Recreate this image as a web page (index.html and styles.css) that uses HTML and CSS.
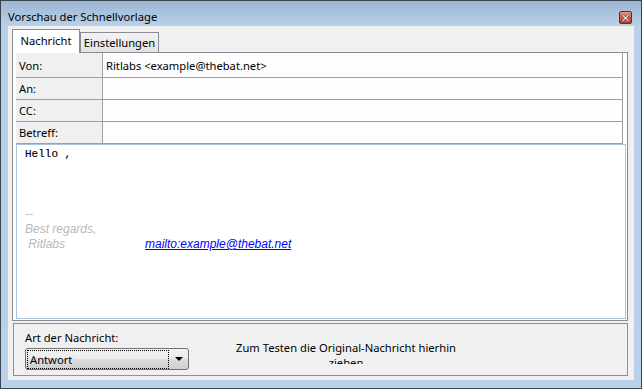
FILE: index.html
```html
<!DOCTYPE html>
<html lang="de">
<head>
  <meta charset="UTF-8">
  <meta name="viewport" content="width=device-width, initial-scale=1.0">
  <title>Vorschau der Schnellvorlage</title>
  <link rel="stylesheet" href="styles.css">
</head>
<body>

<div class="window">
  <!-- Title bar -->
  <div class="titlebar">
    <span class="title">Vorschau der Schnellvorlage</span>
    <button class="close-btn" title="Schließen">
      <svg width="13" height="13" viewBox="0 0 13 13">
        <path d="M4 3.5 L6.5 6 L9 3.5 L10 4.5 L7.5 7 L10 9.5 L9 10.5 L6.5 8 L4 10.5 L3 9.5 L5.5 7 L3 4.5 Z" fill="#fff" stroke="#5a2a22" stroke-width="0.6"/>
      </svg>
    </button>
  </div>

  <div class="client">
    <!-- Tabs -->
    <div class="tabs">
      <div class="tab active">Nachricht</div>
      <div class="tab">Einstellungen</div>
    </div>

    <div class="panel">
      <!-- Header fields -->
      <div class="fields">
        <div class="field first">
          <div class="label">Von:</div>
          <div class="value">Ritlabs &lt;example@thebat.net&gt;</div>
        </div>
        <div class="field">
          <div class="label">An:</div>
          <div class="value"></div>
        </div>
        <div class="field">
          <div class="label">CC:</div>
          <div class="value"></div>
        </div>
        <div class="field">
          <div class="label">Betreff:</div>
          <div class="value"></div>
        </div>
      </div>

      <!-- Message body -->
      <div class="message">
        <div class="mono">Hello ,</div>
        <div class="blank"></div>
        <div class="blank"></div>
        <div class="blank"></div>
        <div class="sig">--</div>
        <div class="sig">Best regards,</div>
        <div class="sig"><span class="sig-name">&nbsp;Ritlabs</span><a class="mailto" href="#">mailto:example@thebat.net</a></div>
      </div>
    </div>

    <!-- Bottom options -->
    <div class="group">
      <div class="type-box">
        <div class="type-label">Art der Nachricht:</div>
        <div class="combo">
          <span class="combo-text">Antwort</span>
          <span class="combo-arrow"></span>
        </div>
      </div>
      <div class="drop-hint">Zum Testen die Original-Nachricht hierhin ziehen</div>
    </div>
  </div>
</div>

</body>
</html>
```

FILE: styles.css
```css
/* General */
body {
  margin: 0;
  font-family: "Noto Sans", "Open Sans", sans-serif;
  font-size: 11.2px;
  color: #000;
}

.window {
  width: 642px;
  height: 389px;
  box-sizing: border-box;
  border: 1px solid #3a4450;
  background: linear-gradient(#9db6d3 0, #b9d0e9 25px, #b9d1ea 100%);
  padding: 0 7px 8px 7px;
  display: flex;
  flex-direction: column;
}

/* Title bar */
.titlebar {
  height: 25px;
  box-sizing: border-box;
  padding: 7px 2px 0 0;
  display: flex;
  align-items: center;
  justify-content: space-between;
}

.title {
  line-height: 18px;
}

.close-btn {
  width: 13px;
  height: 13px;
  padding: 0;
  border: 1px solid #5c2b22;
  border-radius: 2px;
  background: linear-gradient(#e49a89, #c85a43 50%, #b8452e);
  display: flex;
  align-items: center;
  justify-content: center;
  box-sizing: border-box;
}

.close-btn svg {
  display: block;
  margin: -1px;
}

/* Client area */
.client {
  flex: 1;
  background: #f0f0f0;
  padding: 0 6px 0 4px;
  display: flex;
  flex-direction: column;
}

/* Tabs */
.tabs {
  height: 26px;
  display: flex;
  align-items: flex-end;
}

.tab {
  height: 20px;
  box-sizing: border-box;
  border: 1px solid #898c95;
  border-bottom: none;
  background: linear-gradient(#f3f3f3, #e3e3e3);
  line-height: 19px;
  width: 79px;
  text-align: center;
}

.tab.active {
  width: 68px;
  height: 24px;
  margin-bottom: -1px;
  background: #fff;
  line-height: 22px;
  position: relative;
  z-index: 1;
}

/* Tab panel */
.panel {
  height: 269px;
  box-sizing: border-box;
  border: 1px solid #898c95;
  background: #fff;
  padding: 0 1px 1px 3px;
  display: flex;
  flex-direction: column;
}

.fields {
  margin-right: 3px;
  border-right: 1px solid #a0a0a0;
}

.field {
  display: flex;
  height: 22px;
  box-sizing: border-box;
  border-bottom: 1px solid #a0a0a0;
}

.field.first {
  height: 25px;
}

.label {
  width: 87px;
  background: #f0f0f0;
  border-right: 1px solid #a0a0a0;
  padding-left: 3px;
  box-sizing: border-box;
  display: flex;
  align-items: center;
}

.value {
  flex: 1;
  background: #fdfdfd;
  padding-left: 3px;
  display: flex;
  align-items: center;
}

/* Message body */
.message {
  flex: 1;
  border: 1px solid #abc3dd;
  padding: 2px 8px;
  line-height: 15px;
}

.mono {
  font-family: "Liberation Mono", monospace;
  font-size: 11px;
  height: 15px;
  -webkit-text-stroke: 0.15px #000;
}

.blank {
  height: 15px;
}

.sig {
  font-family: "Liberation Sans", Arial, sans-serif;
  font-size: 12px;
  font-style: italic;
  color: #b8b8b8;
  height: 15px;
}

.sig-name {
  display: inline-block;
  width: 120px;
}

.mailto {
  color: #0000ff;
  text-decoration: underline;
}

/* Bottom group */
.group {
  margin: 2px 0 0 1px;
  height: 53px;
  box-sizing: border-box;
  border: 1px solid #8f9096;
  padding: 6px 0 0 11px;
  display: flex;
}

.type-label {
  line-height: 15px;
}

.combo {
  margin-top: 3px;
  width: 164px;
  height: 22px;
  box-sizing: border-box;
  border: 1px solid #707070;
  border-radius: 3px;
  background: linear-gradient(#f2f2f2, #ebebeb 50%, #dddddd 50%, #cfcfcf);
  display: flex;
  align-items: center;
  padding: 1px 5px 1px 1px;
}

.combo-text {
  flex: 1;
  height: 17px;
  line-height: 17px;
  border: 1px dotted #000;
  padding-left: 2px;
  margin-right: 6px;
}

.combo-arrow {
  width: 0;
  height: 0;
  border-left: 4px solid transparent;
  border-right: 4px solid transparent;
  border-top: 4px solid #000;
}

.drop-hint {
  margin: 10px 0 0 37px;
  width: 240px;
  height: 24px;
  line-height: 15px;
  text-align: center;
  overflow: hidden;
}
```
